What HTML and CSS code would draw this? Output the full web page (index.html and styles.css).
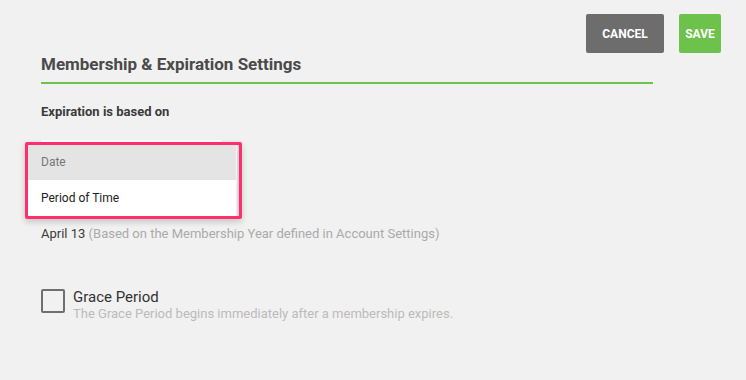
FILE: index.html
```html
<!DOCTYPE html>
<html lang="en">
<head>
    <meta charset="UTF-8">
    <title>Membership Settings</title>
    <link rel="stylesheet" href="styles.css">
</head>
<body>
    <div class="page">
        <div class="actions">
            <button type="button" class="btn btn-cancel">CANCEL</button>
            <button type="button" class="btn btn-save">SAVE</button>
        </div>

        <div class="section">
            <h2 class="section-title">Membership &amp; Expiration Settings</h2>

            <div class="field">
                <label class="field-label">Expiration is based on</label>
                <div class="select-wrap">
                    <div class="select-box"></div>
                    <ul class="menu">
                        <li class="menu-item menu-item-active">Date</li>
                        <li class="menu-item">Period of Time</li>
                    </ul>
                </div>
                <p class="date-line">April 13 <span class="hint">(Based on the Membership Year defined in Account Settings)</span></p>
            </div>

            <div class="check-row">
                <span class="checkbox"></span>
                <div class="check-text">
                    <div class="check-title">Grace Period</div>
                    <div class="check-desc">The Grace Period begins immediately after a membership expires.</div>
                </div>
            </div>
        </div>
    </div>
</body>
</html>
```

FILE: styles.css
```css
body {
    font-family: Roboto, 'Liberation Sans', sans-serif;
    background: #f1f1f1;
    margin: 0;
    color: #333;
}

.page {
    padding: 14px 25px 0 41px;
}

.actions {
    display: flex;
    justify-content: flex-end;
    gap: 15px;
}

.btn {
    border: none;
    border-radius: 2px;
    height: 39px;
    color: #fff;
    font-family: Roboto, 'Liberation Sans', sans-serif;
    font-weight: bold;
    font-size: 12px;
    padding: 0;
    cursor: pointer;
}

.btn-cancel {
    background: #6d6d6d;
    width: 78px;
}

.btn-save {
    background: #6cc24a;
    width: 42px;
}

.section {
    width: 612px;
}

.section-title {
    margin: 1px 0 0;
    padding-bottom: 8px;
    font-size: 17px;
    font-weight: bold;
    color: #4a4a4a;
    border-bottom: 2px solid #6cc24a;
}

.field-label {
    display: block;
    margin-top: 20px;
    font-size: 13px;
    font-weight: bold;
    color: #3a3a3a;
}

.select-wrap {
    position: relative;
    margin-top: 21px;
    width: 180px;
    height: 32px;
}

.select-box {
    background: #fff;
    height: 32px;
}

.menu {
    position: absolute;
    left: -16px;
    top: 2px;
    width: 211px;
    margin: 0;
    padding: 0;
    list-style: none;
    border: 3px solid #ff2f6e;
    border-radius: 2px;
    background: #fff;
    box-shadow: 0 3px 6px rgba(0, 0, 0, 0.18), inset -3px 0 2px -1px #cfcfcf;
}

.menu-item {
    height: 35px;
    line-height: 35px;
    padding-left: 13px;
    font-size: 12px;
    color: #222;
    margin-right: 3px;
}

.menu-item + .menu-item {
    height: 36px;
    line-height: 36px;
}

.menu-item-active {
    background: #e4e4e4;
    color: #777;
}

.date-line {
    margin: 54px 0 0;
    font-size: 13px;
    color: #3a3a3a;
}

.hint {
    color: #aaa;
}

.check-row {
    display: flex;
    align-items: flex-start;
    gap: 8px;
    margin-top: 47px;
}

.checkbox {
    width: 20px;
    height: 20px;
    border: 2px solid #6f6f6f;
    border-radius: 2px;
    margin-top: 1px;
    flex-shrink: 0;
}

.check-title {
    font-size: 15px;
    color: #333;
}

.check-desc {
    font-size: 13px;
    color: #bbb;
}
```
